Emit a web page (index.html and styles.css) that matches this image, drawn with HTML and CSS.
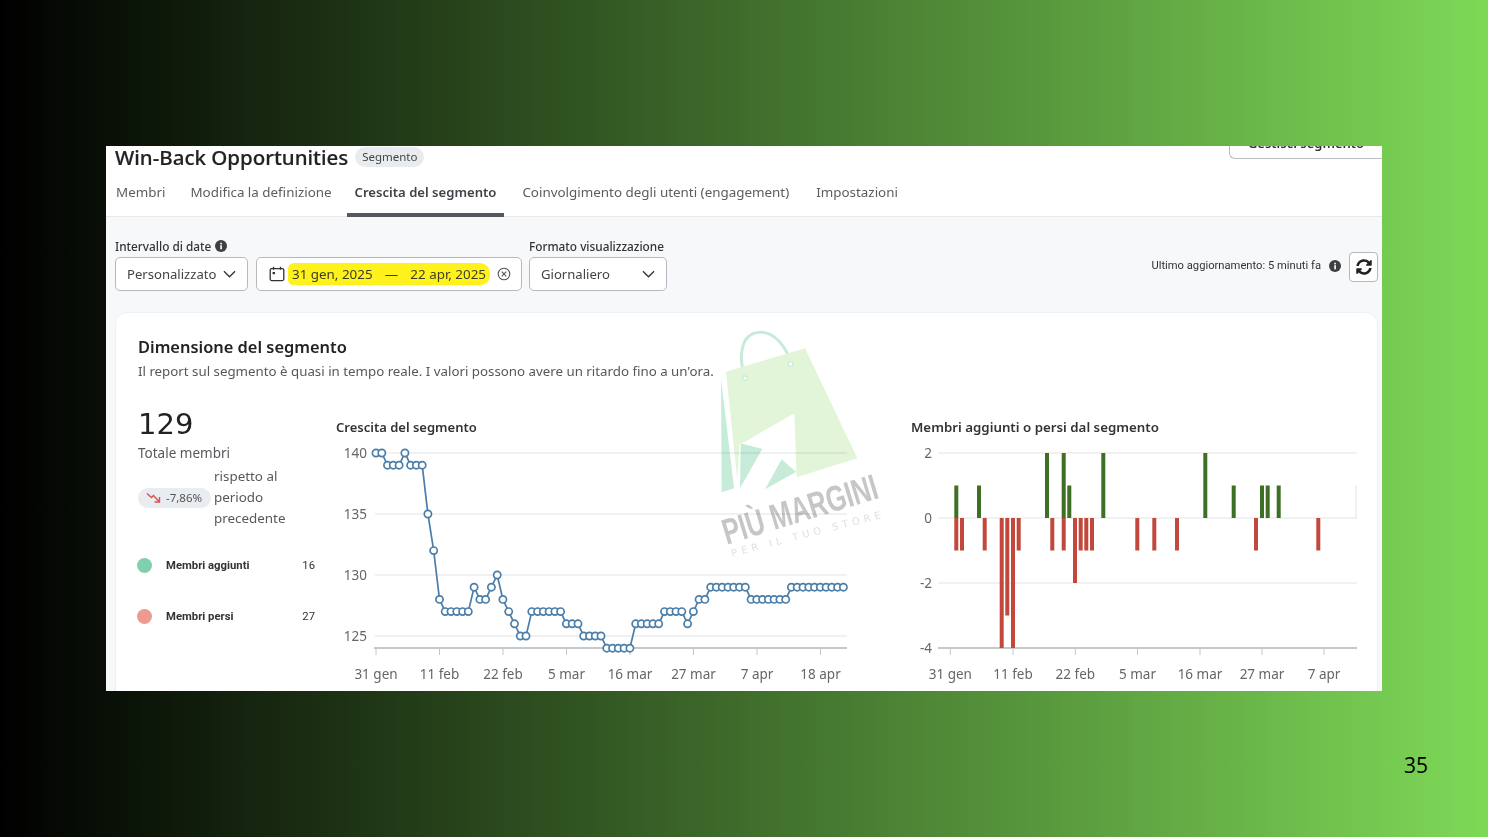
FILE: index.html
```html
<!DOCTYPE html>
<html lang="it">
<head>
	<meta charset="UTF-8">
	<title>Win-Back Opportunities - Crescita del segmento</title>
	<link rel="stylesheet" href="styles.css">
</head>
<body>
	<div class="slide">
		<div class="panel">
			<div class="titleRow">
				<h1>Win-Back Opportunities</h1>
				<span class="badge">Segmento</span>
				<button class="manageBtn">Gestisci segmento</button>
			</div>
			<div class="tabs">
				<a class="tab">Membri</a>
				<a class="tab">Modifica la definizione</a>
				<a class="tab active">Crescita del segmento</a>
				<a class="tab">Coinvolgimento degli utenti (engagement)</a>
				<a class="tab">Impostazioni</a>
			</div>

			<div class="content">
				<div class="filters">
					<div class="field">
						<label>Intervallo di date
							<svg class="info" viewBox="0 0 16 16"><circle cx="8" cy="8" r="8" fill="#3d3f42"/><rect x="7" y="7" width="2.2" height="5.4" fill="#fff"/><rect x="7" y="3.7" width="2.2" height="2.2" fill="#fff"/></svg>
						</label>
						<div class="select rangeSelect">Personalizzato
							<svg class="chevron" viewBox="0 0 14 8"><path d="M1 1l6 6 6-6" fill="none" stroke="#333" stroke-width="1.4"/></svg>
						</div>
					</div>
					<div class="field">
						<div class="select dateSelect">
							<svg class="calendar" viewBox="0 0 16 16"><rect x="1.2" y="2.6" width="13.6" height="12" rx="1.5" fill="none" stroke="#333" stroke-width="1.3"/><path d="M4.5 .8v3M11.5 .8v3" stroke="#333" stroke-width="1.3"/><rect x="3.6" y="6" width="2.4" height="2.2" fill="#333"/></svg>
							<span class="highlight"><span>31 gen, 2025</span><span>—</span><span>22 apr, 2025</span></span>
							<svg class="clear" viewBox="0 0 14 14"><circle cx="7" cy="7" r="5.8" fill="none" stroke="#555" stroke-width="1.1"/><path d="M4.7 4.7l4.6 4.6M9.3 4.7l-4.6 4.6" stroke="#555" stroke-width="1.1"/></svg>
						</div>
					</div>
					<div class="field">
						<label>Formato visualizzazione</label>
						<div class="select formatSelect">Giornaliero
							<svg class="chevron" viewBox="0 0 14 8"><path d="M1 1l6 6 6-6" fill="none" stroke="#333" stroke-width="1.4"/></svg>
						</div>
					</div>
					<div class="updated">
						<span class="updatedText">Ultimo aggiornamento: 5 minuti fa</span>
						<svg class="info" viewBox="0 0 16 16"><circle cx="8" cy="8" r="8" fill="#3d3f42"/><rect x="7" y="7" width="2.2" height="5.4" fill="#fff"/><rect x="7" y="3.7" width="2.2" height="2.2" fill="#fff"/></svg>
						<button class="refreshBtn">
							<svg viewBox="0 0 512 512"><path d="M370.72 133.28C339.458 104.008 298.888 87.962 255.848 88c-77.458.068-144.328 53.178-162.791 126.85-1.344 5.363-6.122 9.15-11.651 9.15H24.103c-7.498 0-13.194-6.807-11.807-14.176C33.933 94.924 134.813 8 256 8c66.448 0 126.791 26.136 171.315 68.685L463.03 40.97C478.149 25.851 504 36.559 504 57.941V192c0 13.255-10.745 24-24 24H345.941c-21.382 0-32.09-25.851-16.971-40.971l41.75-41.749zM32 296h134.059c21.382 0 32.09 25.851 16.971 40.971l-41.75 41.75c31.262 29.273 71.835 45.319 114.876 45.28 77.418-.07 144.315-53.144 162.787-126.849 1.344-5.363 6.122-9.15 11.651-9.15h57.304c7.498 0 13.194 6.807 11.807 14.176C478.067 417.076 377.187 504 256 504c-66.448 0-126.791-26.136-171.315-68.685L48.97 471.03C33.851 486.149 8 475.441 8 454.059V320c0-13.255 10.745-24 24-24z" fill="#222"/></svg>
						</button>
					</div>
				</div>

				<div class="card">
					<h2>Dimensione del segmento</h2>
					<p class="subtitle">Il report sul segmento è quasi in tempo reale. I valori possono avere un ritardo fino a un'ora.</p>

					<div class="cardBody">
						<div class="stats">
							<div class="total">129</div>
							<div class="totalLabel">Totale membri</div>
							<div class="compare">
								<span class="pill">
									<svg viewBox="0 0 16 12"><path d="M1 1.5l4.5 4 2-2L13 9.5M13.5 5v5h-5" fill="none" stroke="#d9534a" stroke-width="1.4"/></svg>
									-7,86%
								</span>
								<span class="compareText">rispetto al periodo precedente</span>
							</div>
							<div class="legendRow">
								<span class="dot green"></span>
								<span class="legendName">Membri aggiunti</span>
								<span class="legendVal">16</span>
							</div>
							<div class="legendRow">
								<span class="dot red"></span>
								<span class="legendName">Membri persi</span>
								<span class="legendVal">27</span>
							</div>
						</div>

						<div class="chart lineChart">
							<h3>Crescita del segmento</h3>
							<!-- viewBox uses the same numbers as the slide so the points are easy to read off -->
							<svg class="plot" viewBox="336 440 530 251">
								<defs>
									<marker id="pt" markerUnits="userSpaceOnUse" markerWidth="11" markerHeight="11" refX="5.5" refY="5.5">
										<circle cx="5.5" cy="5.5" r="3.6" fill="#fff" stroke="#4a7ea8" stroke-width="1.7"/>
									</marker>
								</defs>
								<path class="grid" d="M375 453H847M375 514H847M375 575H847M375 636H847"/>
								<path class="axis" d="M374 648H847"/>
								<path class="tick" d="M376 648v7M439.5 648v7M503 648v7M566.5 648v7M630 648v7M693.5 648v7M757 648v7M820.5 648v7"/>
								<g class="yLabels">
									<text x="367" y="458">140</text>
									<text x="367" y="519">135</text>
									<text x="367" y="580">130</text>
									<text x="367" y="641">125</text>
								</g>
								<g class="xLabels">
									<text x="376" y="679">31 gen</text>
									<text x="439.5" y="679">11 feb</text>
									<text x="503" y="679">22 feb</text>
									<text x="566.5" y="679">5 mar</text>
									<text x="630" y="679">16 mar</text>
									<text x="693.5" y="679">27 mar</text>
									<text x="757" y="679">7 apr</text>
									<text x="820.5" y="679">18 apr</text>
								</g>
								<polyline class="series" points="376,453 381.8,453 387.5,465.2 393.3,465.2 399.1,465.2 404.9,453 410.6,465.2 416.4,465.2 422.2,465.2 427.9,514 433.7,550.6 439.5,599.4 445.2,611.6 451,611.6 456.8,611.6 462.6,611.6 468.3,611.6 474.1,587.2 479.9,599.4 485.6,599.4 491.4,587.2 497.2,575 502.9,599.4 508.7,611.6 514.5,623.8 520.3,636 526,636 531.8,611.6 537.6,611.6 543.3,611.6 549.1,611.6 554.9,611.6 560.6,611.6 566.4,623.8 572.2,623.8 578,623.8 583.7,636 589.5,636 595.3,636 601,636 606.8,648.2 612.6,648.2 618.3,648.2 624.1,648.2 629.9,648.2 635.7,623.8 641.4,623.8 647.2,623.8 653,623.8 658.7,623.8 664.5,611.6 670.3,611.6 676,611.6 681.8,611.6 687.6,623.8 693.4,611.6 699.1,599.4 704.9,599.4 710.7,587.2 716.4,587.2 722.2,587.2 728,587.2 733.7,587.2 739.5,587.2 745.3,587.2 751.1,599.4 756.8,599.4 762.6,599.4 768.4,599.4 774.1,599.4 779.9,599.4 785.7,599.4 791.4,587.2 797.2,587.2 803,587.2 808.8,587.2 814.5,587.2 820.3,587.2 826.1,587.2 831.8,587.2 837.6,587.2 843.4,587.2"/>
							</svg>
						</div>

						<div class="chart barChart">
							<h3>Membri aggiunti o persi dal segmento</h3>
							<svg class="plot" viewBox="911 440 459 251">
								<path class="grid" d="M938 453H1357M938 518H1357M938 583H1357"/>
								<path class="grid" d="M1356 485V518"/>
								<path class="axis" d="M938 648H1357"/>
								<path class="tick" d="M950.3 648v7M1013 648v7M1075.3 648v7M1137.5 648v7M1200 648v7M1262 648v7M1324 648v7"/>
								<g class="yLabels">
									<text x="932" y="458">2</text>
									<text x="932" y="523">0</text>
									<text x="932" y="588">-2</text>
									<text x="932" y="653">-4</text>
								</g>
								<g class="xLabels">
									<text x="950.3" y="679">31 gen</text>
									<text x="1013" y="679">11 feb</text>
									<text x="1075.3" y="679">22 feb</text>
									<text x="1137.5" y="679">5 mar</text>
									<text x="1200" y="679">16 mar</text>
									<text x="1262" y="679">27 mar</text>
									<text x="1324" y="679">7 apr</text>
								</g>
								<path class="barsUp" d="M956.3 518V485.5M979 518V485.5M1047 518V453M1063.7 518V453M1069.3 518V485.5M1103.3 518V453M1205.3 518V453M1233.7 518V485.5M1262 518V485.5M1267.7 518V485.5M1278.7 518V485.5"/>
								<path class="barsDown" d="M956.3 518V550.5M962 518V550.5M984.7 518V550.5M1001.7 518V648M1007.3 518V615.5M1013 518V648M1018.7 518V550.5M1052.3 518V550.5M1063.7 518V550.5M1075 518V583M1080.7 518V550.5M1086.3 518V550.5M1092 518V550.5M1137.3 518V550.5M1154.3 518V550.5M1177 518V550.5M1256 518V550.5M1318.3 518V550.5"/>
							</svg>
						</div>
					</div>
				</div>
			</div>

			<svg class="watermark" viewBox="0 0 600 720">
				<path d="M135 175C115 110 120 40 180 37C225 35 262 85 272 130" fill="none" stroke="#c6ecd9" stroke-width="9"/>
				<path d="M78 155L315 85L472 415L290 472L283 280L135 365L118 372L112 480Z" fill="#e2f5d8"/>
				<circle cx="135" cy="175" r="7" fill="#fff" stroke="#c6ecd9" stroke-width="4"/>
				<circle cx="272" cy="132" r="7" fill="#fff" stroke="#c6ecd9" stroke-width="4"/>
				<path d="M63 175L102 505L65 517Z" fill="#c6ecd9"/>
				<path d="M122 370L187 387L120 505Z" fill="#c6ecd9"/>
				<path d="M245 418L288 456L195 508Z" fill="#c6ecd9"/>
				<text class="wmBrand" x="80" y="674" textLength="482" lengthAdjust="spacingAndGlyphs" transform="rotate(-17 80 674)">PIÙ MARGINI</text>
				<text class="wmTag" x="97" y="710" textLength="462" transform="rotate(-14.5 97 710)">PER IL TUO STORE</text>
			</svg>
		</div>
		<div class="pageNum">35</div>
	</div>
</body>
</html>
```

FILE: styles.css
```css
* {
	box-sizing: border-box;
}
body {
	margin: 0;
	font-family: "Noto Sans", "Open Sans", sans-serif;
	color: #222;
}
h1, h2, h3, p {
	margin: 0;
	font-weight: normal;
}
.slide {
	width: 1488px;
	height: 837px;
	overflow: hidden;
	padding: 146px 60px 0 106px;
	background: linear-gradient(90deg, #000 0%, #7ed957 100%);
}
.panel {
	position: relative;
	width: 1276px;
	height: 545px;
	overflow: hidden;
	background: #fff;
	display: flex;
	flex-direction: column;
	filter: blur(0.35px);
}
.pageNum {
	margin-top: 60px;
	text-align: right;
	font-family: "Open Sans", sans-serif;
	font-size: 21px;
	line-height: 28px;
	color: #000;
}

/* header */
.titleRow {
	flex: none;
	display: flex;
	align-items: center;
	height: 22px;
	padding-left: 9px;
}
.titleRow h1 {
	font-size: 20.5px;
	line-height: 22px;
	font-weight: 500;
	color: #222;
	-webkit-text-stroke: 0.2px #222;
}
.badge {
	margin-left: 7px;
	padding: 0 7px;
	height: 20px;
	line-height: 20px;
	font-size: 11.5px;
	color: #444;
	background: #e9ecef;
	border-radius: 10px;
}
.manageBtn {
	margin: -24px 0 0 auto;
	width: 153px;
	height: 28px;
	padding: 0 0 4px;
	background: #fff;
	border: 1px solid #b9bcc0;
	border-right: 0;
	border-radius: 0 0 0 6px;
	font-family: inherit;
	font-size: 13px;
	font-weight: 600;
	color: #333;
}
.tabs {
	flex: none;
	display: flex;
	height: 49px;
	padding-left: 2px;
	border-bottom: 1px solid #e8e9eb;
}
.tab {
	height: 49px;
	padding: 13px 8px 0;
	font-size: 13.4px;
	line-height: 22px;
	color: #5a5d61;
	margin-right: 9px;
}
.tab:nth-child(2) {
	margin-right: 7px;
}
.tab:nth-child(3) {
	margin-right: 10px;
}
.tab:nth-child(4) {
	margin-right: 11px;
}
.tab.active {
	font-size: 13.1px;
	font-weight: 600;
	color: #3f4246;
	border-bottom: 4px solid #55585c;
}

/* filters */
.content {
	flex: 1;
	background: #f7f8fa;
	padding: 0 4px 0 9px;
}
.filters {
	display: flex;
	align-items: flex-end;
	gap: 7px;
	height: 74px;
}
.field label {
	display: flex;
	align-items: center;
	gap: 4px;
	height: 20px;
	margin-bottom: 1px;
	font-size: 11.8px;
	font-weight: 500;
	color: #333;
}
.info {
	width: 12px;
	height: 12px;
}
.select {
	display: flex;
	align-items: center;
	height: 34px;
	background: #fff;
	border: 1px solid #b5b8bd;
	border-radius: 5px;
	font-size: 13.1px;
	color: #444;
}
.rangeSelect {
	width: 133px;
	margin-right: 1px;
	padding: 0 11px;
	justify-content: space-between;
}
.formatSelect {
	width: 138px;
	padding: 0 11px;
	justify-content: space-between;
}
.dateSelect {
	width: 266px;
	padding-left: 12px;
}
.chevron {
	width: 13px;
	height: 8px;
}
.calendar {
	width: 16px;
	height: 16px;
}
.highlight {
	display: flex;
	justify-content: space-between;
	width: 202px;
	height: 22px;
	line-height: 22px;
	margin: 0 7px 0 3px;
	padding: 0 4px;
	background: #fff21c;
	border-radius: 6px 10px 9px 5px;
	font-size: 13.4px;
	color: #3d3d2a;
}
.clear {
	width: 14px;
	height: 14px;
}
.updated {
	display: flex;
	align-items: center;
	margin: 0 0 9px auto;
	font-family: Roboto, sans-serif;
	font-size: 11.2px;
	color: #333;
}
.updatedText {
	margin-bottom: 4px;
}
.updated .info {
	margin: 0 8px 3px;
}
.refreshBtn {
	display: flex;
	align-items: center;
	justify-content: center;
	width: 29px;
	height: 30px;
	padding: 0;
	background: #fff;
	border: 1px solid #b5b8bd;
	border-radius: 4px;
}
.refreshBtn svg {
	width: 16px;
	height: 16px;
}

/* card */
.card {
	margin-top: 21px;
	height: 400px;
	padding: 21px 0 0 22px;
	background: #fff;
	border: 1px solid #eff0f2;
	border-radius: 12px;
}
.card h2 {
	font-size: 16.4px;
	line-height: 26px;
	font-weight: 600;
	color: #222;
}
.subtitle {
	font-size: 13.3px;
	line-height: 22px;
	color: #55585c;
}
.cardBody {
	display: flex;
	margin-top: 25px;
}
.stats {
	width: 198px;
	flex: none;
	padding-right: 21px;
}
.total {
	font-family: "DejaVu Sans", sans-serif;
	font-size: 29px;
	line-height: 34px;
	color: #222;
}
.totalLabel {
	font-size: 13.5px;
	line-height: 24px;
	color: #55585c;
}
.compare {
	display: flex;
	align-items: center;
	margin-top: 1px;
}
.pill {
	display: flex;
	align-items: center;
	gap: 4px;
	flex: none;
	width: 73px;
	height: 20px;
	padding-left: 8px;
	font-size: 11.5px;
	color: #555;
	background: #e9ecf0;
	border-radius: 10px;
	margin-right: 3px;
}
.pill svg {
	width: 16px;
	height: 12px;
}
.compareText {
	font-size: 13.4px;
	line-height: 21px;
	color: #55585c;
}
.legendRow {
	display: flex;
	align-items: center;
	height: 20px;
	margin-top: 31px;
	font-family: Roboto, sans-serif;
	font-size: 11.3px;
	font-weight: 700;
	color: #333;
}
.compare + .legendRow {
	margin-top: 26px;
}
.dot {
	width: 15px;
	height: 15px;
	margin: 0 14px 0 -1px;
	border-radius: 50%;
}
.dot.green {
	background: #82cfb0;
}
.dot.red {
	background: #ee9a8e;
}
.legendVal {
	margin-left: auto;
	font-weight: 400;
}
.chart h3 {
	margin-top: 10px;
	font-size: 13px;
	line-height: 20px;
	font-weight: 600;
	color: #333;
}
.lineChart {
	width: 575px;
	flex: none;
}
.barChart {
	width: 459px;
	flex: none;
}
.barChart h3 {
	font-size: 13.3px;
}
.plot {
	display: block;
	margin-top: 3px;
}
.lineChart .plot {
	width: 530px;
	height: 251px;
}
.barChart .plot {
	width: 459px;
	height: 251px;
}
.grid {
	fill: none;
	stroke: #e2e3e5;
	stroke-width: 1;
}
.axis {
	fill: none;
	stroke: #b4b6b9;
	stroke-width: 1.3;
}
.tick {
	fill: none;
	stroke: #c4c6c9;
	stroke-width: 1;
}
.yLabels text {
	font-size: 13.5px;
	fill: #666;
	text-anchor: end;
}
.xLabels text {
	font-size: 13.5px;
	fill: #666;
	text-anchor: middle;
}
.series {
	fill: none;
	stroke: #4a7ea8;
	stroke-width: 1.7;
	marker-start: url(#pt);
	marker-mid: url(#pt);
	marker-end: url(#pt);
}
.barsUp {
	fill: none;
	stroke: #3f6f24;
	stroke-width: 4;
}
.barsDown {
	fill: none;
	stroke: #c2483c;
	stroke-width: 4;
}

/* logo stamped over the screenshot */
.watermark {
	position: absolute;
	left: 594px;
	top: 174px;
	width: 200px;
	height: 240px;
	mix-blend-mode: multiply;
}
.wmBrand {
	font-family: "Liberation Sans", sans-serif;
	font-size: 108px;
	font-weight: 700;
	fill: #c6c6c6;
}
.wmTag {
	font-family: "DejaVu Sans", sans-serif;
	font-size: 30px;
	fill: #e0e0e0;
}
```
